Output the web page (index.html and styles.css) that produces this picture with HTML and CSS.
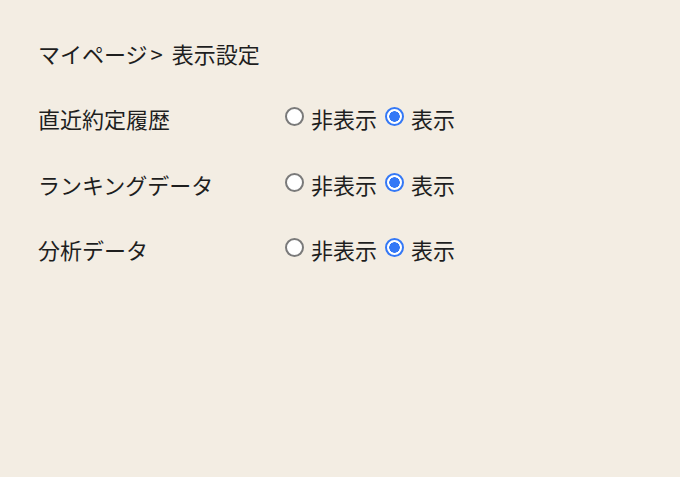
FILE: index.html
```html
<!DOCTYPE html>
<html lang="ja">
<head>
<meta charset="utf-8">
<link rel="stylesheet" href="styles.css">
</head>
<body>
<div class="page">
  <div class="crumb">マイページ<span class="sep">&gt;</span> 表示設定</div>
  <div class="settings">
    <div class="row">
      <div class="label">直近約定履歴</div>
      <div class="opts">
        <label class="opt"><input type="radio" name="a"><span>非表示</span></label>
        <label class="opt"><input type="radio" name="a" checked><span>表示</span></label>
      </div>
    </div>
    <div class="row">
      <div class="label">ランキングデータ</div>
      <div class="opts">
        <label class="opt"><input type="radio" name="b"><span>非表示</span></label>
        <label class="opt"><input type="radio" name="b" checked><span>表示</span></label>
      </div>
    </div>
    <div class="row">
      <div class="label">分析データ</div>
      <div class="opts">
        <label class="opt"><input type="radio" name="c"><span>非表示</span></label>
        <label class="opt"><input type="radio" name="c" checked><span>表示</span></label>
      </div>
    </div>
  </div>
</div>
</body>
</html>
```
FILE: styles.css
```css
html, body {
  margin: 0;
  background: #f3ede3;
  height: 100%;
}
.page {
  padding: 37px 38px;
  font-family: "Noto Sans CJK JP", "Noto Sans", sans-serif;
  font-size: 22px;
  color: #1e1e1e;
}
.crumb {
  line-height: 32px;
}
.sep {
  padding: 0 4px 0 3px;
}
.settings {
  margin-top: 33px;
  display: flex;
  flex-direction: column;
  gap: 33.5px;
}
.row {
  display: flex;
  align-items: center;
  height: 32px;
}
.label {
  width: 247px;
  flex: none;
}
.opts {
  display: flex;
  align-items: center;
  gap: 8px;
}
.opt {
  display: flex;
  align-items: center;
  gap: 7px;
}
.opt input {
  appearance: none;
  -webkit-appearance: none;
  box-sizing: border-box;
  flex: none;
  width: 19px;
  height: 19px;
  margin: -3px 0 0 0;
  border: 2px solid #7a7a7a;
  border-radius: 50%;
  background: #fff;
}
.opt input:checked {
  border-color: #3478f6;
  background: radial-gradient(circle, #3478f6 0 5px, #fff 5.5px);
}
```
